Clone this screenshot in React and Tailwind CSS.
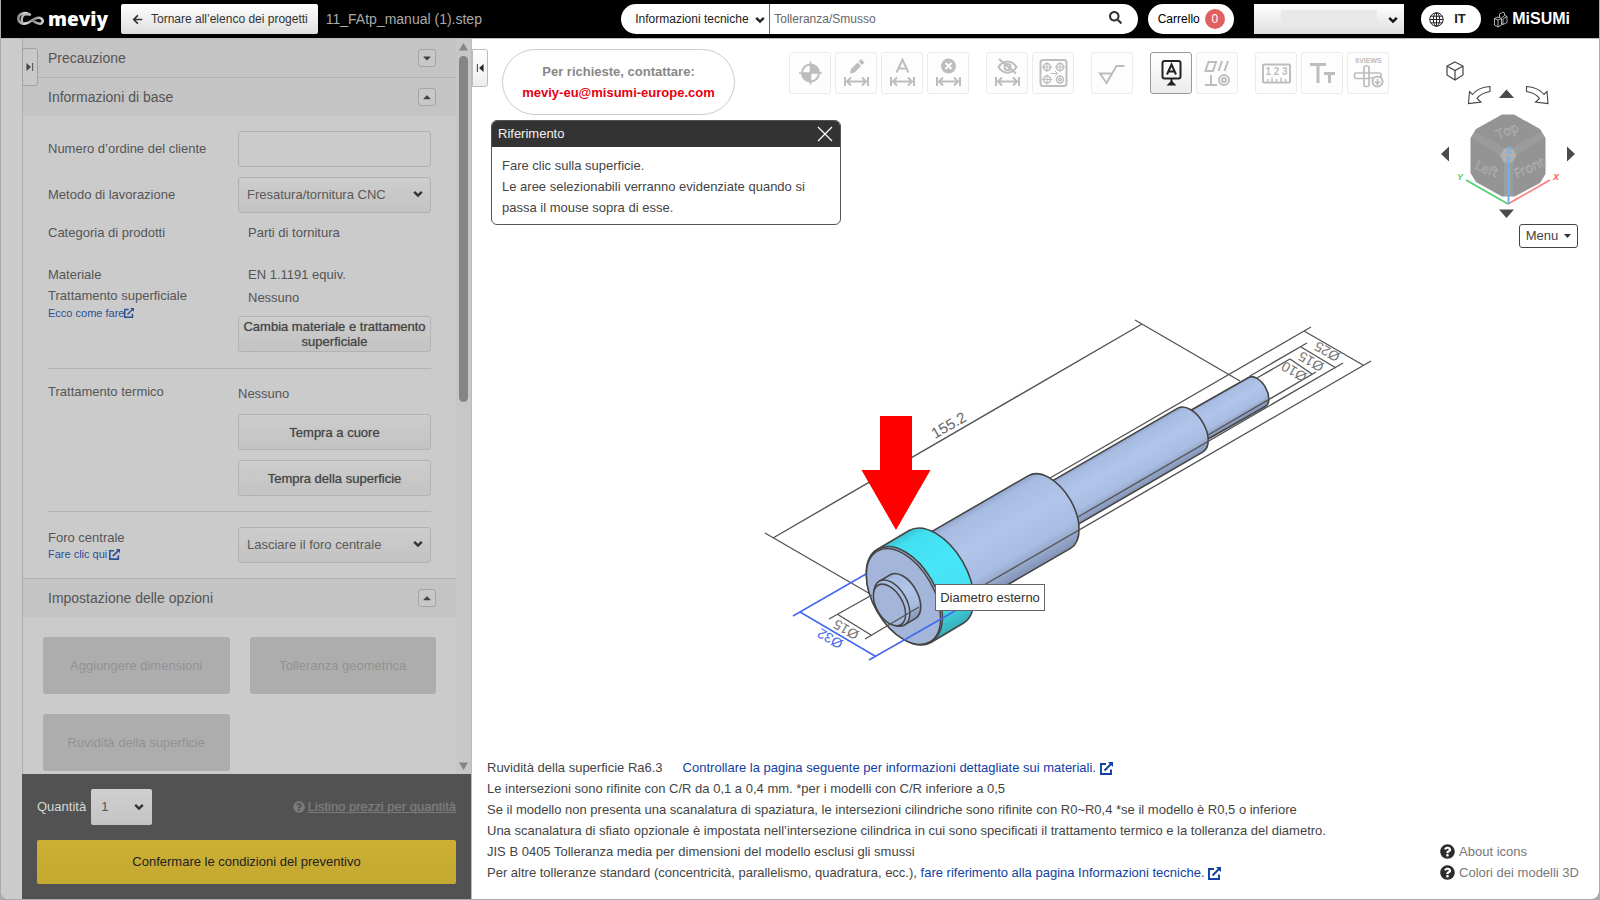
import { useState } from 'react'
import { FaArrowLeft, FaCaretDown, FaCaretUp, FaQuestionCircle, FaSearch } from 'react-icons/fa'

const Chevron = ({ className }) => (
    <svg className={className} width="10" height="8" viewBox="0 0 10 8" fill="none" stroke="currentColor" strokeWidth="2.4">
        <path d="M1.2 1.8 5 5.6 8.8 1.8" />
    </svg>
)

const External = ({ size = 13 }) => (
    <svg className="inline-block" width={size} height={size} viewBox="0 0 13 13" fill="none" stroke="currentColor" strokeWidth="1.9">
        <path d="M6 2H1v10h10V7.500M4.500 8.500 11 2" />
        <path d="M8 0h5v5z" fill="currentColor" stroke="none" />
    </svg>
)

const MeviyMark = () => (
    <svg width="30" height="16" viewBox="0 0 30 16" fill="none">
        <defs>
            <linearGradient id="mark" x1="0" y1="0" x2="1" y2="0">
                <stop offset="0" stopColor="#8a8a8a" />
                <stop offset="0.3" stopColor="#e4e4e4" />
                <stop offset="0.6" stopColor="#8a8a8a" />
                <stop offset="1" stopColor="#d2d2d2" />
            </linearGradient>
        </defs>
        <path d="M14 3.500C9.500.8 2.500 2 2.300 7.500c-.2 5.500 7 6.500 12 3 3.500-2.500 6.500-4.500 10-3.500 3 1 3.200 4.500.700 5.500-2.500.8-5-.5-8-2.500" stroke="url(#mark)" strokeWidth="2.600" strokeLinecap="round" />
        <path d="M13 3.500C6 2 5 7 6 12" stroke="#b5b5b5" strokeWidth="2.400" strokeLinecap="round" />
    </svg>
)

const Globe = () => (
    <svg width="15" height="15" viewBox="0 0 15 15" fill="none" stroke="#222" strokeWidth="1">
        <circle cx="7.5" cy="7.5" r="6.7" />
        <ellipse cx="7.5" cy="7.5" rx="3.2" ry="6.700" />
        <path d="M7.500.8v13.400M.8 7.500h13.400M1.700 4.200h11.600M1.700 10.800h11.600" />
    </svg>
)

const MisumiMark = () => (
    <svg width="14" height="17" viewBox="0 0 14 17" fill="none" stroke="#ddd" strokeWidth="0.8">
        <path d="M.5 7.500 4 6l3.500 1.500v6.500L4 16 .5 14zM.5 7.500 4 9l3.500-1.500M4 9v7" />
        <path d="M7.500 12.500 9 13.500l4-2V5.500L11 4.500M9 13.500V8l4-2.500M5.500 6.500V3L9 1l1.500 1v2.500L7.500 7" />
    </svg>
)

const Header = () => (
    <header className="flex h-[38px] shrink-0 items-center bg-black pl-[15px] pr-[29px] text-xs">
        <a href="#home" className="flex items-center gap-[2px] text-white">
            <MeviyMark />
            <span className="w-[73px] font-['Open_Sans'] text-[19px] font-extrabold leading-8">meviy</span>
        </a>
        <button className="flex h-[30px] shrink-0 items-center gap-2 rounded-[2px] bg-linear-to-b from-white to-[#dedede] pl-[11px] pr-[10px] text-[#333]">
            <FaArrowLeft size={11} />
            Tornare all’elenco dei progetti
        </button>
        <h1 className="ml-2 whitespace-nowrap text-sm text-[#aaa]">11_FAtp_manual (1).step</h1>

        <form className="ml-auto flex h-[30px] w-[517px] items-center overflow-hidden rounded-full bg-white">
            <div className="relative h-full w-[149px] border-r border-[#666]">
                <select aria-label="Categoria di ricerca" className="h-full w-full appearance-none pl-[14px] text-[#222]">
                    <option>Informazioni tecniche</option>
                </select>
                <Chevron className="pointer-events-none absolute right-1 top-3 text-[#222]" />
            </div>
            <input aria-label="Cerca" placeholder="Tolleranza/Smusso" className="h-full min-w-0 flex-1 px-1 placeholder:text-[#666] outline-none" />
            <button type="button" aria-label="Cerca" className="mb-1 mr-4 text-[#333]"><FaSearch size={13} /></button>
        </form>

        <button className="ml-[10px] flex h-[30px] w-[86px] items-center justify-center gap-[5px] rounded-full bg-white text-black">
            Carrello
            <span className="flex h-5 w-5 items-center justify-center rounded-full bg-[#e06060] text-white">0</span>
        </button>
        <div className="relative ml-5 h-[30px] w-[150px]">
            <select aria-label="Account" className="h-full w-full appearance-none bg-linear-to-b from-white to-[#dedede]">
                <option></option>
            </select>
            <span className="pointer-events-none absolute left-[27px] top-[6px] h-[18px] w-24 bg-[#e8e8e8]" />
            <Chevron className="pointer-events-none absolute right-[6px] top-3 text-[#111]" />
        </div>
        <button className="ml-[17px] flex h-7 w-[60px] items-center gap-[10px] rounded-full bg-white pl-2 text-[13px] font-bold text-[#222]">
            <Globe />
            IT
        </button>
        <a href="#misumi" className="ml-[13px] flex items-center gap-1 text-base font-bold text-white">
            <MisumiMark />
            MiSUMi
        </a>
    </header>
)

const SectionHead = ({ title, open, className = '' }) => (
    <div className={`flex h-[39px] items-center justify-between border-[#b1b1b1] bg-[#c4c4c4] pl-[25px] pr-[20px] ${className}`}>
        <h2 className="text-sm text-[#555]">{title}</h2>
        <button aria-label={title} className="flex h-[18px] w-[18px] items-center justify-center rounded-[3px] border border-[#a4a4a4] bg-[#c8c8c8] text-[#444]">
            {open ? <FaCaretUp size={12} /> : <FaCaretDown size={12} />}
        </button>
    </div>
)

const Select = ({ id, value }) => (
    <div className="relative h-9">
        <select id={id} className="h-full w-full appearance-none rounded-[3px] border border-[#b1b1b1] bg-linear-to-b from-[#cdcdcd] to-[#c3c3c3] pl-2 text-[#5a5a5a]">
            <option>{value}</option>
        </select>
        <Chevron className="pointer-events-none absolute right-[8px] top-[13px] text-[#333]" />
    </div>
)

const SideButton = ({ children }) => (
    <button className="h-9 w-full rounded-[3px] border border-[#b3b3b3] bg-linear-to-b from-[#cdcdcd] to-[#c3c3c3] leading-[15px] text-[#444] text-shadow-[0_0_1px_#777]">
        {children}
    </button>
)

const Sidebar = () => {
    const [order, setOrder] = useState('')

    return (
        <aside className="flex w-[471px] shrink-0 border-r border-[#bbb] bg-[#cbcbcb] pl-[21px] text-[13px] text-[#555]">
            <div className="flex min-h-0 min-w-0 flex-1 flex-col">
                <div className="relative flex min-h-0 flex-1 border-l border-[#adadad]">
                    <button aria-label="Espandi pannello" className="absolute -left-px top-[9px] z-10 flex h-[38px] w-4 items-center justify-center rounded-r-[3px] border border-[#a2a2a2] bg-[#c8c8c8]">
                        <svg width="8" height="8" viewBox="0 0 8 9" fill="#444"><path d="M0 0 5 4.500 0 9zM6.500 0h1v9h-1z" /></svg>
                    </button>
                    <div className="min-w-0 flex-1 overflow-hidden">
                        <SectionHead title="Precauzione" className="border-b" />
                        <SectionHead title="Informazioni di base" open className="-mt-px border-t" />

                        <div className="px-[25px] pb-[15px] pt-[15px]">
                            <div className="grid grid-cols-[190px_1fr] items-center gap-y-[10px]">
                                <label htmlFor="order">Numero d’ordine del cliente</label>
                                <input
                                    id="order"
                                    value={order}
                                    onChange={(e) => setOrder(e.target.value)}
                                    className="h-9 w-full rounded-[3px] border border-[#b1b1b1] px-2 outline-none"
                                />
                                <label htmlFor="method">Metodo di lavorazione</label>
                                <Select id="method" value="Fresatura/tornitura CNC" />
                            </div>
                            <div className="mt-[10px] grid grid-cols-[190px_1fr] leading-5">
                                <span>Categoria di prodotti</span>
                                <span className="pl-[10px]">Parti di tornitura</span>
                            </div>
                            <div className="mt-[21px] grid grid-cols-[190px_1fr] border-b border-[#b3b3b3] pb-4 leading-[21px]">
                                <div>
                                    <p>Materiale</p>
                                    <p>Trattamento superficiale</p>
                                    <a href="#material" className="flex items-center text-[11px] leading-[14px] text-[#2c4f96]">Ecco come fare<External size={10} /></a>
                                </div>
                                <div>
                                    <p className="pl-[10px]">EN 1.1191 equiv.</p>
                                    <p className="mb-2 mt-[2px] pl-[10px]">Nessuno</p>
                                    <SideButton>Cambia materiale e trattamento superficiale</SideButton>
                                </div>
                            </div>
                            <div className="grid grid-cols-[190px_1fr] border-b border-[#b3b3b3] pb-[15px] pt-[13px] leading-5">
                                <p>Trattamento termico</p>
                                <div className="flex flex-col gap-[10px]">
                                    <p className="mt-[2px]">Nessuno</p>
                                    <SideButton>Tempra a cuore</SideButton>
                                    <SideButton>Tempra della superficie</SideButton>
                                </div>
                            </div>
                            <div className="grid grid-cols-[190px_1fr] pt-[15px]">
                                <div>
                                    <label htmlFor="hole" className="block leading-[21px]">Foro centrale</label>
                                    <a href="#hole" className="flex items-center gap-[2px] text-[11px] leading-3 text-[#2c4f96]">Fare clic qui<External size={11} /></a>
                                </div>
                                <Select id="hole" value="Lasciare il foro centrale" />
                            </div>
                        </div>

                        <SectionHead title="Impostazione delle opzioni" open className="border-t" />
                        <div className="grid grid-cols-2 gap-5 p-5 text-[#929292]">
                            <button className="h-[57px] rounded-[3px] bg-[#adadad]">Aggiungere dimensioni</button>
                            <button className="h-[57px] rounded-[3px] bg-[#adadad]">Tolleranza geometrica</button>
                            <button className="h-[57px] rounded-[3px] bg-[#adadad]">Ruvidità della superficie</button>
                        </div>
                    </div>
                    <div className="flex w-[15px] flex-col items-center bg-[#c7c7c7] pb-1 pt-1">
                        <svg width="9" height="8" viewBox="0 0 9 8" fill="#858585"><path d="M4.500 0 9 7.500H0z" /></svg>
                        <div className="mt-[5px] h-[346px] w-[9px] rounded-full bg-[#858585]" />
                        <svg className="mt-auto" width="9" height="8" viewBox="0 0 9 8" fill="#858585"><path d="M4.500 8 9 .5H0z" /></svg>
                    </div>
                </div>

                <div className="bg-[#525252] px-[15px] pb-[15px] pt-[15px]">
                    <div className="flex items-center">
                        <label htmlFor="qty" className="text-[#d8d8d8]">Quantità</label>
                        <div className="relative ml-[5px] h-9 w-[61px]">
                            <select id="qty" className="h-full w-full appearance-none rounded-[2px] bg-linear-to-b from-[#cfcfcf] to-[#c4c4c4] pl-[10px] text-[#555]">
                                <option>1</option>
                            </select>
                            <Chevron className="pointer-events-none absolute right-2 top-[14px] text-[#333]" />
                        </div>
                        <a href="#prices" className="ml-auto flex items-center gap-[3px] text-[#7a7a7a] text-shadow-[0_0_1px_#7a7a7a]">
                            <FaQuestionCircle size={12} />
                            <span className="underline">Listino prezzi per quantità</span>
                        </a>
                    </div>
                    <button className="mt-[15px] h-11 w-full rounded-[2px] bg-linear-to-b from-[#ccaf33] to-[#c5a831] text-[#222]">
                        Confermare le condizioni del preventivo
                    </button>
                </div>
            </div>
        </aside>
    )
}

const DimArrow = () => <path d="M1 18v9M24 18v9M3 22.500h19M7 18.500l-4 4 4 4M18 18.500l4 4-4 4" />

const tools = [
    [
        {
            name: 'Origine',
            icon: <>
                <circle cx="12.5" cy="14" r="8.500" />
                <path d="M12.500 2.500v23M1 14h23" strokeWidth="1.600" />
                <path d="M12.500 5.500a8.500 8.500 0 0 1 8.500 8.500h-8.500zM12.500 22.500a8.500 8.500 0 0 1-8.500-8.500h8.500z" fill="currentColor" stroke="none" />
            </>
        },
        {
            name: 'Modifica dimensione',
            icon: <><path d="M6 14.500 7 10l6.500-6.500 3.500 3.500-6.500 6.500zM14.500 2.500 17 0l3.500 3.500L18 6z" fill="currentColor" stroke="none" /><DimArrow /></>
        },
        { name: 'Testo dimensione', icon: <><path d="M6.500 13.500 12.500.8l6 12.700M8.500 9.500h8" /><DimArrow /></> },
        {
            name: 'Elimina dimensione',
            icon: <><circle cx="12.5" cy="7" r="7.500" fill="currentColor" stroke="none" /><path d="m9.500 4 6 6M15.500 4l-6 6" stroke="#fff" /><DimArrow /></>
        }
    ],
    [
        {
            name: 'Nascondi dimensione',
            icon: <><path d="M3.500 8C8 .5 17 .5 21.500 8 17 15.500 8 15.500 3.500 8zM4 0l17 14.500" /><circle cx="12.500" cy="8" r="3" /><DimArrow /></>
        },
        {
            name: 'Gruppo fori',
            icon: <>
                <rect x="-0.500" y="1" width="26" height="26" rx="2.500" />
                <g strokeWidth="1.500">
                    <circle cx="6" cy="8" r="3.500" /><circle cx="19" cy="8" r="3.500" /><circle cx="6" cy="20.500" r="3.500" /><circle cx="19" cy="20.500" r="3.500" />
                    <circle cx="19" cy="20.500" r="1.300" />
                    <path d="M6 3v10M1 8h10M19 3v10M14 8h10M6 15.500v10M1 20.500h10M9.500 14.500h6.500M14 12l2.500 2.500L14 17" strokeWidth="1" />
                </g>
            </>
        }
    ],
    [{ name: 'Rugosità', icon: <path d="M0 14.500h12L6.500 24zM6.500 24 16.500 7h8" /> }],
    [
        {
            name: 'Riferimento',
            active: true,
            icon: <><rect x="3.500" y="2" width="18" height="17.500" rx="2" /><path d="M8 15.500 12.500 5.500 17 15.500M9.500 12.500h6M12.500 19.500v4" /><path d="m12.500 21.500 5 5h-10z" fill="currentColor" stroke="none" /></>
        },
        {
            name: 'Tolleranza geometrica',
            icon: <><path d="M3.500 3h7.500l-3 9H.5zM17 2l-3.500 10M23 2l-3.500 10M6 16v10M0 26h12" /><circle cx="19" cy="21" r="5" /><circle cx="19" cy="21" r="2" /></>
        }
    ],
    [
        {
            name: 'Misura',
            icon: <><rect x="-1" y="5.500" width="27" height="18" rx="1" /><path d="M4 23v-3M8 23v-4.500M12.500 23v-3M17 23v-4.500M21.500 23v-3" strokeWidth="1.400" /><text x="12.500" y="15.500" textAnchor="middle" fontSize="10" fontWeight="bold" fill="currentColor" stroke="none">1 2 3</text></>
        },
        { name: 'Testo', icon: <path d="M0 5.500h16M8 5.500V24M14 14.500h11M19.500 14.500V24" strokeWidth="3" /> },
        {
            name: '6 viste',
            icon: <>
                <text x="12.500" y="4" textAnchor="middle" fontSize="7" fontWeight="bold" fill="currentColor" stroke="none">6VIEWS</text>
                <path d="M8 8.500q0-1.500 1.500-1.500h2q1.500 0 1.500 1.500V14h10.500q1.500 0 1.500 1.500V19H13v7q0 1.500-1.500 1.500h-2q-1.500 0-1.500-1.500v-6.500H0q-1.500 0-1.500-1.500v-2.500Q-1.500 14 0 14h8zM8 14v5.500h5V14z" strokeWidth="1.700" />
                <circle cx="21.500" cy="22.500" r="5" fill="#fdfdfd" />
                <path d="M21.500 20v4.500M19 22.500l2.500 2.500 2.500-2.500" strokeWidth="1.700" />
            </>
        }
    ]
]

const Toolbar = () => (
    <div className="ml-[54px] mt-[13px] flex gap-[17px]">
        {tools.map((group, i) => (
            <div key={i} className="flex gap-1">
                {group.map((tool) => (
                    <button
                        key={tool.name}
                        aria-label={tool.name}
                        className={`flex h-[42px] w-[42px] items-center justify-center rounded-[3px] border ${tool.active
                            ? 'border-[#999] bg-linear-to-b from-white to-[#ececec] text-[#222]'
                            : 'border-[#ebebeb] bg-[#fdfdfd] text-[#bdbdbd]'
                            }`}
                    >
                        <svg className="overflow-visible" width="25" height="28" viewBox="0 0 25 28" fill="none" stroke="currentColor" strokeWidth="2">
                            {tool.icon}
                        </svg>
                    </button>
                ))}
            </div>
        ))}
    </div>
)

const ViewCube = () => (
    <svg width="142" height="160" viewBox="1436 60 142 160" fill="none">
        <path d="m1455 62 8 4v9l-8 5-8-5v-9zM1447 66l8 4.500 8-4.500M1455 70.500V80" stroke="#444" strokeWidth="1.200" />
        <path d="M1490 86.500v5c-7 1-10 3-13 7l4 3.500-12.500 1.500 1-12 3 3c4-5 10-7.500 17.500-8z" stroke="#444" strokeWidth="1.100" />
        <path d="M1526.500 86.500v5c7 1 10 3 13 7l-4 3.500 12.500 1.500-1-12-3 3c-4-5-10-7.500-17.500-8z" stroke="#444" strokeWidth="1.100" />
        <path d="m1506.500 89.500 7.500 8.500h-15zM1506.500 218l7.500-8.500h-15zM1441 154l8-7.500v15zM1575 154l-8-7.500v15z" fill="#4a4a4a" />
        <path d="M1502 114.500h12l26 14.500 5.500 9v36l-5.500 9-25.500 13.500h-12.500L1476 182l-5.500-9v-35l5.500-9z" fill="#949494" />
        <path d="m1471 138 5-6 31 17-3 8zM1545 138l-5-6-30.500 17 3 8z" fill="#9b9b9b" />
        <path d="M1504 161h9v35h-9z" fill="#9d9d9d" />
        <path d="m1504 148.500 8.500 0 4 7-4 7h-8.500l-4-7z" fill="#b0b0b0" />
        <g fill="#8b8b8b" stroke="#b9b9b9" strokeWidth="0.500" fontSize="13" textAnchor="middle" className="font-['Open_Sans']">
            <text transform="translate(1509 135) rotate(-22)">Top</text>
            <text transform="translate(1485 173) rotate(22)">Left</text>
            <text transform="translate(1531 172) rotate(-24)">Front</text>
        </g>
        <path d="M1466 180l42 24" stroke="#4fd06e" strokeWidth="1.500" />
        <path d="M1550 180l-42 24" stroke="#f77" strokeWidth="1.500" />
        <path d="M1508.500 156v48" stroke="#6fb1f2" strokeWidth="2" />
        <g fontSize="9" fontWeight="bold" fontStyle="italic" textAnchor="middle">
            <text x="1460" y="180" fill="#4fd06e">Y</text>
            <text x="1556" y="180" fill="#f55">X</text>
            <text x="1509" y="153" fill="#6fb1f2">Z</text>
        </g>
    </svg>
)

// isometric cylinder: c1 front centre, c2 back centre, r is the ellipse's long half axis
const RATIO = 0.577
const rim = ([x, y], r, side) => [x + side * r * 0.5, y + side * r * 0.866]

const cylinderPath = (c1, c2, r) => {
    const [a, b, c, d] = [rim(c1, r, -1), rim(c2, r, -1), rim(c2, r, 1), rim(c1, r, 1)]
    const arc = `A ${r} ${r * RATIO} 60 0`
    return `M ${a} L ${b} ${arc} 1 ${c} L ${d} ${arc} 1 ${a} Z`
}

const Cylinder = ({ id, from, to, r, hot }) => {
    const [x1, y1] = rim(from, r, -1)
    const [x2, y2] = rim(from, r, 1)
    // the gradient has to run square to the axis, so its end is the foot of the lower rim on that normal
    return (
        <>
            <linearGradient id={id} gradientUnits="userSpaceOnUse" x1={x1} y1={y1} x2={x2} y2={y2}>
                <stop offset="0" stopColor={hot ? '#3bc6d6' : '#93a6cd'} />
                <stop offset="0.08" stopColor={hot ? '#42dff0' : '#a8bce2'} />
                <stop offset="0.4" stopColor={hot ? '#48e6f8' : '#b0c5e9'} />
                <stop offset="0.75" stopColor={hot ? '#46dff0' : '#a9bde2'} />
                <stop offset="1" stopColor={hot ? '#37aebb' : '#8292b5'} />
            </linearGradient>
            <path d={cylinderPath(from, to, r)} fill={`url(#${id})`} stroke="#444" strokeWidth="1.600" />
        </>
    )
}

const Face = ({ at, r, fill = 'none' }) => (
    <ellipse rx={r} ry={r * RATIO} transform={`translate(${at}) rotate(60)`} fill={fill} stroke="#444" strokeWidth="1.500" />
)

const dimTexts = [
    { x: 860, y: 632, text: 'Ø15' },
    { x: 1341, y: 354, text: 'Ø25' },
    { x: 1325, y: 364, text: 'Ø15' },
    { x: 1308, y: 374, text: 'Ø10' }
]

const Model = () => (
    <figure className="relative ml-[288px] mt-[62px] h-[360px] w-[620px]">
        <svg width="620" height="360" viewBox="760 310 620 360" fill="none">
            <g stroke="#555" strokeWidth="1.400">
                <path d="M765 533l107 62M1135 320l105 61M773 538l369-214" />
                <path d="M1050 478l261-151M1250 376l57-33M1257 378l33-19" />
            </g>
            <Cylinder id="tip" from={[1190, 430]} to={[1257, 392]} r={16.8} />
            <Cylinder id="neck" from={[1049, 512]} to={[1190.5, 430]} r={25.2} />
            <Cylinder id="body" from={[937, 577]} to={[1049.5, 512]} r={42} />
            <Cylinder id="flange" from={[904, 596]} to={[936, 577]} r={53.7} hot />
            <Face at={[905, 595]} r={53} fill="#a3b5d8" />
            <Face at={[903.5, 596.5]} r={52.5} fill="#a3b5d8" />
            <Cylinder id="boss" from={[892, 603]} to={[903, 596.5]} r={25.2} />
            <Face at={[892, 603]} r={25.2} fill="#a9bce2" />
            <Face at={[889.5, 605]} r={22.8} fill="#a3b5d8" />
            <g stroke="#555" strokeWidth="1.400">
                <path d="M872 595l-43 24M919 607l-54 32M837 614l34 21" />
                <path d="M984 585l387-224M1304 331l59 34" />
                <path d="M1078 517l265-154M1301 347l35 21" />
                <path d="M1208 435l108-63M1290 359l22 15" />
            </g>
            <path d="M866 574l-73 42M955 611l-86 49M800 612l75 44" stroke="#4468ee" strokeWidth="1.500" />
            <text transform="translate(935 439) rotate(-30)" fontSize="15" fill="#666">155.2</text>
            {dimTexts.map((d) => (
                <text key={`${d.x}`} transform={`translate(${d.x} ${d.y}) rotate(210)`} fontSize="14" fill="#777">{d.text}</text>
            ))}
            <text transform="translate(844 641) rotate(210)" fontSize="14" fill="#4468ee">Ø32</text>
            <path d="M880 416h32v54h18.500L896 530l-34.500-60H880z" fill="#f00" />
        </svg>
        <div role="tooltip" className="absolute left-[175px] top-[274px] flex h-[27px] w-[110px] items-center justify-center whitespace-nowrap border border-[#666] bg-white text-[#333]">
            Diametro esterno
        </div>
    </figure>
)

const ReferenceDialog = () => (
    <section className="absolute left-[19px] top-[81px] w-[350px] overflow-hidden rounded-md border border-[#555] bg-white">
        <header className="flex h-[26px] items-center justify-between bg-[#333] px-[6px] text-[#f2f2f2]">
            Riferimento
            <button aria-label="Chiudi" className="mr-px">
                <svg width="16" height="16" viewBox="0 0 16 16" stroke="#fff" strokeWidth="1.200"><path d="m1 1 14 14M15 1 1 15" /></svg>
            </button>
        </header>
        <p className="px-[10px] pb-[6px] pt-2 leading-[21px] text-[#444]">
            Fare clic sulla superficie.<br />
            Le aree selezionabili verranno evidenziate quando si passa il mouse sopra di esse.
        </p>
    </section>
)

const Notes = () => (
    <footer className="mt-auto flex items-end justify-between pb-4 pl-[15px] pr-5 leading-[21px] text-[#444]">
        <div>
            <p>
                <span className="mr-5">Ruvidità della superficie Ra6.3</span>
                <a href="#materials" className="text-[#1040a5]">Controllare la pagina seguente per informazioni dettagliate sui materiali. <External /></a>
            </p>
            <p>Le intersezioni sono rifinite con C/R da 0,1 a 0,4 mm. *per i modelli con C/R inferiore a 0,5</p>
            <p>Se il modello non presenta una scanalatura di spaziatura, le intersezioni cilindriche sono rifinite con R0~R0,4 *se il modello è R0,5 o inferiore</p>
            <p>Una scanalatura di sfiato opzionale è impostata nell’intersezione cilindrica in cui sono specificati il trattamento termico e la tolleranza del diametro.</p>
            <p>JIS B 0405 Tolleranza media per dimensioni del modello esclusi gli smussi</p>
            <p>
                Per altre tolleranze standard (concentricità, parallelismo, quadratura, ecc.),{' '}
                <a href="#info" className="text-[#1040a5]">fare riferimento alla pagina Informazioni tecniche. <External /></a>
            </p>
        </div>
        <div className="shrink-0 text-[#777]">
            <a href="#icons" className="flex items-center gap-1"><FaQuestionCircle size={15} className="text-[#2b2b2b]" />About icons</a>
            <a href="#colors" className="flex items-center gap-1"><FaQuestionCircle size={15} className="text-[#2b2b2b]" />Colori dei modelli 3D</a>
        </div>
    </footer>
)

const App = () => {
    return (
        <div className="h-screen bg-[#aaa] pb-px pl-px pr-px font-['Liberation_Sans',Arial,sans-serif]">
            <div className="flex h-full flex-col overflow-hidden rounded-b-lg bg-white">
                <Header />
                <div className="flex min-h-0 flex-1 border-t border-[#bdbdbd]">
                    <Sidebar />
                    <main className="relative flex min-w-0 flex-1 flex-col text-[13px]">
                        <div className="flex items-start">
                            <button aria-label="Comprimi pannello" className="mt-[10px] flex h-[38px] w-4 items-center justify-center rounded-r-[3px] border border-[#bbb] bg-linear-to-b from-white to-[#eee]">
                                <svg width="8" height="8" viewBox="0 0 8 9" fill="#222"><path d="M8 0 3 4.500 8 9zM.5 0h1v9h-1z" /></svg>
                            </button>
                            <address className="ml-[14px] mt-[10px] flex h-[66px] w-[233px] flex-col items-center justify-center rounded-full border border-[#ccc] text-center font-bold not-italic leading-[21px]">
                                <span className="text-[#888]">Per richieste, contattare:</span>
                                <a href="mailto:meviy-eu@misumi-europe.com" className="text-[#e60012]">meviy-eu@misumi-europe.com</a>
                            </address>
                            <Toolbar />
                            <div className="ml-auto mr-[21px] mt-[21px] flex flex-col items-end">
                                <ViewCube />
                                <button className="mt-1 flex h-6 w-[59px] items-center justify-center gap-[6px] rounded-[3px] border border-[#444] text-[#444]">
                                    Menu
                                    <svg width="7" height="4" viewBox="0 0 7 4" fill="#333"><path d="M0 0h7L3.500 4z" /></svg>
                                </button>
                            </div>
                        </div>
                        <ReferenceDialog />
                        <Model />
                        <Notes />
                    </main>
                </div>
            </div>
        </div>
    )
}

export default App
